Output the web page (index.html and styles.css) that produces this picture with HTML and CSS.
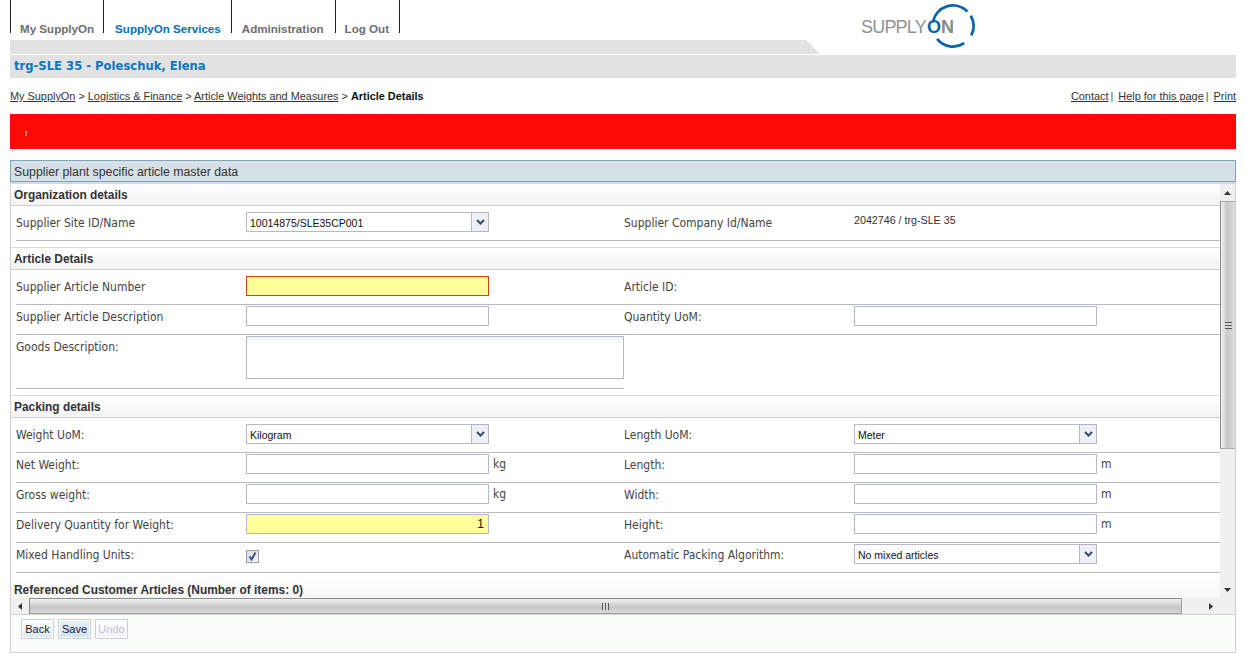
FILE: index.html
```html
<!DOCTYPE html>
<html lang="en">
<head>
    <meta charset="UTF-8">
    <title>Article Details</title>
    <link rel="stylesheet" href="styles.css">
</head>
<body>
    <header class="top">
        <nav class="tabs">
            <a class="tab tab-first">My SupplyOn</a>
            <a class="tab tab-active">SupplyOn Services</a>
            <a class="tab tab-admin">Administration</a>
            <a class="tab tab-last">Log Out</a>
        </nav>
        <svg class="logo" width="130" height="52" viewBox="0 0 130 52">
            <text class="logo-text" x="0" y="33">SUPPLY</text>
            <text class="logo-on" x="66" y="33">O</text>
            <text class="logo-n" x="80" y="33">N</text>
            <path class="logo-ring" d="M71.8 22.4 A20.5 20.5 0 0 1 106.5 11.5"/>
            <path class="logo-ring" d="M109.75 15.75 A20.5 20.5 0 0 1 110.27 35.3"/>
            <path class="logo-ring" d="M103.2 43.2 A20.5 20.5 0 0 1 76.07 38.9"/>
        </svg>
    </header>

    <div class="band-tab"></div>
    <div class="band">trg-SLE 35 - Poleschuk, Elena</div>

    <div class="crumbs">
        <div>
            <a>My SupplyOn</a> &gt; <a>Logistics &amp; Finance</a> &gt; <a>Article Weights and Measures</a> &gt; <b>Article Details</b>
        </div>
        <div class="links">
            <a>Contact</a><span class="sep">|</span>
            <a>Help for this page</a><span class="sep">|</span>
            <a>Print</a>
        </div>
    </div>

    <div class="alert"><span class="alert-mark">!</span></div>

    <div class="panel-title">Supplier plant specific article master data</div>

    <div class="panel">
        <div class="content">
            <h3 class="section">Organization details</h3>
            <div class="row row-first">
                <label>Supplier Site ID/Name</label>
                <div class="select"><span>10014875/SLE35CP001</span><i class="arrow"><svg width="9" height="6" viewBox="0 0 9 6"><path d="M1 1 L4.5 4.5 L8 1" /></svg></i></div>
                <label>Supplier Company Id/Name</label>
                <div class="value">2042746 / trg-SLE 35</div>
            </div>

            <h3 class="section section-next">Article Details</h3>
            <div class="row row-first">
                <label>Supplier Article Number</label>
                <input class="field field-error" type="text">
                <label>Article ID:</label>
                <div></div>
            </div>
            <div class="row">
                <label>Supplier Article Description</label>
                <input class="field" type="text">
                <label>Quantity UoM:</label>
                <input class="field" type="text">
            </div>
            <div class="row-area">
                <label>Goods Description:</label>
                <textarea class="area"></textarea>
            </div>

            <h3 class="section section-next">Packing details</h3>
            <div class="row row-first">
                <label>Weight UoM:</label>
                <div class="select"><span>Kilogram</span><i class="arrow"><svg width="9" height="6" viewBox="0 0 9 6"><path d="M1 1 L4.5 4.5 L8 1" /></svg></i></div>
                <label>Length UoM:</label>
                <div class="select"><span>Meter</span><i class="arrow"><svg width="9" height="6" viewBox="0 0 9 6"><path d="M1 1 L4.5 4.5 L8 1" /></svg></i></div>
            </div>
            <div class="row">
                <label>Net Weight:</label>
                <div class="unit-wrap"><input class="field" type="text"><span class="unit">kg</span></div>
                <label>Length:</label>
                <div class="unit-wrap"><input class="field" type="text"><span class="unit">m</span></div>
            </div>
            <div class="row">
                <label>Gross weight:</label>
                <div class="unit-wrap"><input class="field" type="text"><span class="unit">kg</span></div>
                <label>Width:</label>
                <div class="unit-wrap"><input class="field" type="text"><span class="unit">m</span></div>
            </div>
            <div class="row">
                <label>Delivery Quantity for Weight:</label>
                <input class="field field-required" type="text" value="1">
                <label>Height:</label>
                <div class="unit-wrap"><input class="field" type="text"><span class="unit">m</span></div>
            </div>
            <div class="row">
                <label>Mixed Handling Units:</label>
                <div class="check-wrap">
                    <span class="check"><svg width="9" height="9" viewBox="0 0 9 9"><path d="M1.5 4.5 L3.5 7.5 L7.5 0.5" /></svg></span>
                </div>
                <label>Automatic Packing Algorithm:</label>
                <div class="select"><span>No mixed articles</span><i class="arrow"><svg width="9" height="6" viewBox="0 0 9 6"><path d="M1 1 L4.5 4.5 L8 1" /></svg></i></div>
            </div>

            <h3 class="section section-next section-last">Referenced Customer Articles (Number of items: 0)</h3>
        </div>

        <div class="vbar">
            <div class="sb-btn"><svg width="7" height="4" viewBox="0 0 7 4"><path d="M3.5 0 L7 4 L0 4 Z" /></svg></div>
            <div class="vthumb"><span class="vgrip"></span></div>
            <div class="sb-fill"></div>
            <div class="sb-btn"><svg width="7" height="4" viewBox="0 0 7 4"><path d="M0 0 L7 0 L3.5 4 Z" /></svg></div>
        </div>
        <div class="hbar">
            <div class="sb-btn-h"><svg width="4" height="7" viewBox="0 0 4 7"><path d="M4 0 L4 7 L0 3.5 Z" /></svg></div>
            <div class="hthumb"><span class="hgrip"></span></div>
            <div class="sb-fill"></div>
            <div class="sb-btn-h sb-btn-end"><svg width="4" height="7" viewBox="0 0 4 7"><path d="M0 0 L0 7 L4 3.5 Z" /></svg></div>
        </div>
        <div class="corner"></div>
    </div>

    <div class="actions">
        <button type="button">Back</button>
        <button type="button" class="btn-save">Save</button>
        <button type="button" class="btn-disabled">Undo</button>
    </div>
</body>
</html>
```

FILE: styles.css
```css
body {
    margin: 0;
    padding: 0 10px;
    width: 1226px;
    background-color: #ffffff;
    font-family: 'Liberation Sans', Arial, sans-serif;
    font-size: 11px;
    color: #333333;
    overflow: hidden;
}

/* top navigation */
.top {
    display: flex;
    height: 40px;
}

.tabs {
    display: flex;
    flex: none;
    width: 389px;
    height: 33px;
    border-right: 1px solid #222222;
}

.tab {
    border-left: 1px solid #222222;
    padding: 22px 10px 0 9px;
    height: 11px;
    line-height: 14px;
    font-size: 11.6px;
    font-weight: bold;
    color: #6e6e6e;
    white-space: nowrap;
}

.tab-first {
    padding-right: 9px;
}

.tab-active {
    padding-left: 11px;
    color: #0070b8;
}

.tab-admin {
    padding-left: 10px;
    padding-right: 11px;
}

.logo {
    flex: none;
    margin: 0 0 0 461px;
}

.logo-text, .logo-on, .logo-n {
    font-family: 'Liberation Sans', Arial, sans-serif;
    font-size: 18px;
    letter-spacing: -0.8px;
    fill: #929292;
}

.logo-on, .logo-n {
    font-weight: bold;
}

.logo-on {
    fill: #0a64ac;
}

.logo-n {
    fill: #8a8a8a;
}

.logo-ring {
    fill: none;
    stroke: #0a64ac;
    stroke-width: 2.8;
}

/* grey band below the tabs */
.band-tab {
    height: 14px;
    width: 810px;
    background-color: #e2e2e2;
    clip-path: polygon(0 0, 796px 0, 810px 14px, 0 14px);
}

.band {
    margin-top: 1px;
    height: 23px;
    line-height: 23px;
    padding-left: 4px;
    background-color: #e2e2e2;
    font-family: 'DejaVu Sans', Verdana, sans-serif;
    font-size: 11.6px;
    font-weight: bold;
    color: #0f75bd;
}

.crumbs {
    display: flex;
    justify-content: space-between;
    height: 36px;
    line-height: 36px;
    font-size: 10.9px;
    color: #333333;
}

.crumbs a {
    text-decoration: underline;
}

.crumbs b {
    color: #111111;
}

.sep {
    margin: 0 2px 0 2px;
    color: #555555;
}

.alert {
    height: 35px;
    line-height: 36px;
    padding-left: 15px;
    background-color: #ff0808;
}

.alert-mark {
    color: #ffffff;
    font-size: 7px;
    font-weight: bold;
}

.panel-title {
    margin-top: 11px;
    height: 20px;
    line-height: 22px;
    padding-left: 3px;
    border: 1px solid #7aa8bb;
    background-color: #d6e0e6;
    font-size: 12.3px;
    color: #333333;
}

/* scrolling panel, scrollbars drawn by hand */
.panel {
    display: grid;
    grid-template-columns: 1fr 15px;
    grid-template-rows: 414px 16px;
    border-left: 1px solid #d0d0d0;
    border-right: 1px solid #d0d0d0;
    border-top: 2px solid #d8d8d8;
    height: 430px;
    overflow: hidden;
}

.content {
    overflow: hidden;
    background-color: #ffffff;
}

.section {
    margin: 0;
    height: 21px;
    line-height: 23px;
    padding-left: 3px;
    font-size: 11.9px;
    font-weight: bold;
    color: #333333;
    background: linear-gradient(#ffffff, #f3f3f3);
    border-bottom: 1px solid #cfcfcf;
}

.section-next {
    margin-top: 6px;
    border-top: 1px solid #dcdcdc;
}

.section-last {
    border: none;
    margin-top: 6px;
    background: linear-gradient(#fdfdfd, #f6f6f6);
}

.row {
    display: grid;
    grid-template-columns: 230px 378px 230px 1fr;
    align-items: start;
    height: 29px;
    margin-left: 5px;
    border-bottom: 1px solid #b8bcbc;
}

.row-first {
    height: 34px;
}

.row label, .row-area label {
    padding-top: 4px;
    line-height: 16px;
    font-family: 'DejaVu Sans Condensed', 'DejaVu Sans', sans-serif;
    font-stretch: condensed;
    font-size: 12px;
    color: #444444;
}

.row-first label {
    padding-top: 9px;
}

.row > .field, .row > .select, .row > .unit-wrap {
    margin-top: 1px;
}

.row-first > .field, .row-first > .select {
    margin-top: 6px;
}

.row-area {
    display: grid;
    grid-template-columns: 230px 378px;
    width: 608px;
    height: 53px;
    margin-left: 5px;
    border-bottom: 1px solid #b8bcbc;
}

.field {
    box-sizing: border-box;
    display: block;
    width: 243px;
    height: 20px;
    margin: 0;
    padding: 0 4px;
    border: 1px solid #b4b8cc;
    background-color: #ffffff;
    font-family: 'Liberation Sans', Arial, sans-serif;
    font-size: 12px;
    color: #111111;
    outline: none;
}

.field-error {
    border-color: #d04010;
    background-color: #ffff99;
}

.field-required {
    background-color: #ffff99;
    text-align: right;
}

.area {
    box-sizing: border-box;
    display: block;
    width: 378px;
    height: 43px;
    margin: 1px 0 0 0;
    padding: 0;
    border: 1px solid #b4b8cc;
    background: linear-gradient(#eef0f4, #ffffff 8px);
    resize: none;
    outline: none;
}

.select {
    box-sizing: border-box;
    display: flex;
    justify-content: space-between;
    width: 243px;
    height: 20px;
    border: 1px solid #b4b8cc;
    background-color: #ffffff;
    font-size: 10.5px;
    line-height: 20px;
    color: #111111;
}

.select span {
    padding-left: 3px;
}

.arrow {
    display: flex;
    align-items: center;
    justify-content: center;
    width: 16px;
    border-left: 1px solid #b4b8cc;
    background-color: #eef0f3;
}

.arrow svg {
    fill: none;
    stroke: #2c4a80;
    stroke-width: 2;
}

.unit-wrap {
    display: flex;
}

.unit {
    margin-left: 4px;
    line-height: 20px;
    font-family: 'DejaVu Sans Condensed', 'DejaVu Sans', sans-serif;
    font-stretch: condensed;
    font-size: 12px;
    color: #444444;
}

.value {
    padding-top: 6px;
    line-height: 16px;
    font-size: 10.7px;
    color: #333333;
}

.check-wrap {
    padding-top: 7px;
}

.check {
    box-sizing: border-box;
    display: block;
    width: 13px;
    height: 13px;
    padding: 1px;
    border: 1px solid #9a9ea8;
    background: linear-gradient(135deg, #d8dbe0, #f4f5f7);
}

.check svg {
    display: block;
    fill: none;
    stroke: #3a4f94;
    stroke-width: 2;
}

/* scrollbars */
.vbar {
    display: flex;
    flex-direction: column;
    background-color: #f0f0f0;
}

.sb-btn {
    flex: none;
    height: 17px;
    display: flex;
    align-items: center;
    justify-content: center;
}

.sb-btn-h {
    flex: none;
    width: 17px;
    display: flex;
    align-items: center;
    justify-content: center;
}

.sb-btn-end {
    padding-right: 2px;
    box-sizing: border-box;
}

.sb-btn svg, .sb-btn-h svg {
    fill: #333333;
}

.sb-fill {
    flex: 1;
}

.vthumb {
    flex: none;
    height: 246px;
    display: flex;
    align-items: center;
    justify-content: center;
    border-left: 1px solid #8c8c8c;
    border-top: 1px solid #a8a8a8;
    border-bottom: 1px solid #a8a8a8;
    background: linear-gradient(90deg, #f2f2f2, #c8c8c8 45%, #dedede);
}

.vgrip {
    width: 7px;
    height: 7px;
    background: repeating-linear-gradient(#555555 0, #555555 1px, #d8d8d8 1px, #d8d8d8 3px);
}

.hbar {
    display: flex;
    background-color: #f0f0f0;
}

.hthumb {
    flex: none;
    width: 1151px;
    margin-left: 1px;
    display: flex;
    align-items: center;
    justify-content: center;
    border-left: 1px solid #8c8c8c;
    border-top: 1px solid #8c8c8c;
    border-right: 1px solid #a0a0a0;
    border-bottom: 1px solid #a0a0a0;
    background: linear-gradient(#f2f2f2, #c6c6c6 60%, #d8d8d8);
}

.hgrip {
    width: 7px;
    height: 7px;
    background: repeating-linear-gradient(90deg, #555555 0, #555555 1px, #d8d8d8 1px, #d8d8d8 3px);
}

.corner {
    background-color: #f0f0f0;
}

/* button strip */
.actions {
    display: flex;
    gap: 4px;
    box-sizing: border-box;
    height: 39px;
    padding: 4px 0 0 10px;
    border: 1px solid #d0d0d0;
    background-color: #fbfdfb;
}

button {
    box-sizing: border-box;
    width: 33px;
    height: 20px;
    margin: 0;
    padding: 0;
    border: 1px solid #ccd0d4;
    box-shadow: inset 0 0 0 1px #ffffff;
    background: linear-gradient(#ffffff, #d8e8f4);
    font-family: 'Liberation Sans', Arial, sans-serif;
    font-size: 11px;
    color: #222222;
}

.btn-save {
    background: linear-gradient(#e4f0f8, #cfe3f3);
}

.btn-disabled {
    color: #c0c4d0;
    background: linear-gradient(#ffffff, #eef2f8);
}
```
